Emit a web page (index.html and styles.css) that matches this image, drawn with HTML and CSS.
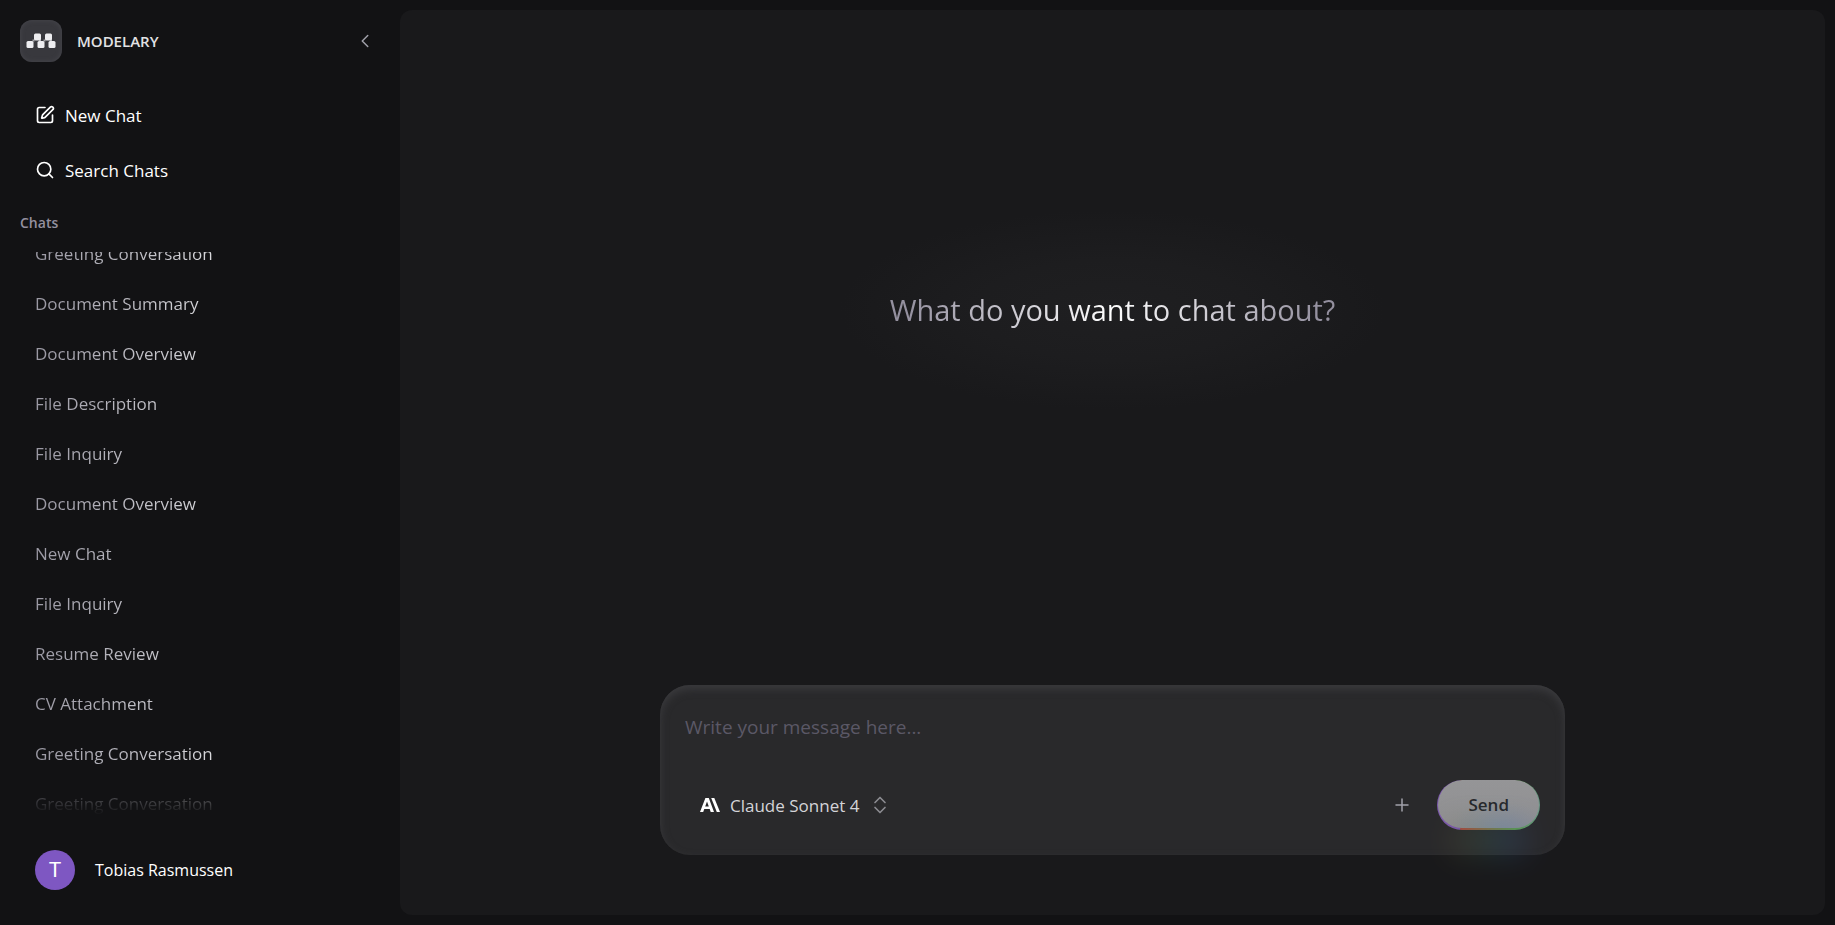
FILE: index.html
```html
<!DOCTYPE html>
<html lang="en">
<head>
<meta charset="utf-8">
<title>Modelary</title>
<link rel="stylesheet" href="styles.css">
</head>
<body class="app">
<aside class="sidebar">
  <header class="brand">
    <span class="brand-logo">
      <svg width="30" height="16" viewBox="0 0 30 16" fill="#ededf0" aria-hidden="true">
        <rect x="0.500" y="8" width="7" height="7" rx="1.500"/><rect x="8" y="0.500" width="7" height="7" rx="1.500"/><rect x="11.500" y="8" width="7" height="7" rx="1.500"/><rect x="19" y="0.500" width="7" height="7" rx="1.500"/><rect x="22.500" y="8" width="7" height="7" rx="1.500"/>
        <path d="M6.500 6.500h2v2h-2zM13 6.500h2v2h-2zM17.500 6.500h2v2h-2zM24 6.500h2v2h-2z" opacity=".6"/>
      </svg>
    </span>
    <span class="brand-name">MODELARY</span>
    <button class="collapse" type="button" aria-label="Collapse sidebar">
      <svg width="22" height="22" viewBox="0 0 24 24" fill="none" stroke="currentColor" stroke-width="1.600" stroke-linecap="round" stroke-linejoin="round"><path d="m15 18-6-6 6-6"/></svg>
    </button>
  </header>
  <nav class="actions">
    <button class="action" type="button">
      <svg width="20" height="20" viewBox="0 0 24 24" fill="none" stroke="currentColor" stroke-width="2" stroke-linecap="round" stroke-linejoin="round" aria-hidden="true"><path d="M12 3H5a2 2 0 0 0-2 2v14a2 2 0 0 0 2 2h14a2 2 0 0 0 2-2v-7"/><path d="M18.375 2.625a1 1 0 0 1 3 3l-9.013 9.014a2 2 0 0 1-.853.505l-2.873.840a.5.5 0 0 1-.620-.620l.840-2.873a2 2 0 0 1 .506-.852z"/></svg>
      New Chat
    </button>
    <button class="action" type="button">
      <svg width="20" height="20" viewBox="0 0 24 24" fill="none" stroke="currentColor" stroke-width="2" stroke-linecap="round" stroke-linejoin="round" aria-hidden="true"><circle cx="11" cy="11" r="8"/><path d="m21 21-4.300-4.300"/></svg>
      Search Chats
    </button>
  </nav>
  <h2 class="section-title">Chats</h2>
  <div class="history">
    <ul class="chat-list">
      <li><a class="chat" href="#"><span class="chat-title">Greeting Conversation</span></a></li>
      <li><a class="chat" href="#"><span class="chat-title">Document Summary</span></a></li>
      <li><a class="chat" href="#"><span class="chat-title">Document Overview</span></a></li>
      <li><a class="chat" href="#"><span class="chat-title">File Description</span></a></li>
      <li><a class="chat" href="#"><span class="chat-title">File Inquiry</span></a></li>
      <li><a class="chat" href="#"><span class="chat-title">Document Overview</span></a></li>
      <li><a class="chat" href="#"><span class="chat-title">New Chat</span></a></li>
      <li><a class="chat" href="#"><span class="chat-title">File Inquiry</span></a></li>
      <li><a class="chat" href="#"><span class="chat-title">Resume Review</span></a></li>
      <li><a class="chat" href="#"><span class="chat-title">CV Attachment</span></a></li>
      <li><a class="chat" href="#"><span class="chat-title">Greeting Conversation</span></a></li>
      <li><a class="chat" href="#"><span class="chat-title">Greeting Conversation</span></a></li>
    </ul>
  </div>
  <button class="profile" type="button"><span class="avatar">T</span>Tobias Rasmussen</button>
</aside>
<main class="panel">
  <section class="welcome"><h1 class="welcome-title">What do you want to chat about?</h1></section>
  <form class="composer">
    <textarea class="message" rows="1" aria-label="Message" placeholder="Write your message here..."></textarea>
    <div class="toolbar">
      <label class="model">
        <svg width="20" height="16" viewBox="0 0 20 16" fill="#fff" aria-hidden="true"><path fill-rule="evenodd" d="M5.400 1h3.400L14 15h-3.300l-1-2.900H4.300L3.200 15H0zM5.200 9.500h3.600L7 4.600z"/><path d="M11.200 1h3.100L20 15h-3.200z"/></svg>
        <select class="model-select" aria-label="Model"><option>Claude Sonnet 4</option></select>
        <svg class="chevrons" width="20" height="20" viewBox="0 0 24 24" fill="none" stroke="currentColor" stroke-width="2" stroke-linecap="round" stroke-linejoin="round" aria-hidden="true"><path d="m6 9 6-6 6 6M6 15l6 6 6-6"/></svg>
      </label>
      <button class="attach" type="button" aria-label="Add attachment">
        <svg width="20" height="20" viewBox="0 0 20 20" stroke="currentColor" stroke-width="1.500" stroke-linecap="round" aria-hidden="true"><path d="M10 4v12M4 10h12"/></svg>
      </button>
      <button class="send" type="submit">Send</button>
    </div>
  </form>
</main>
</body>
</html>
```
FILE: styles.css
```css
* { box-sizing: border-box; }

.app {
  margin: 0;
  height: 100vh;
  display: flex;
  overflow: hidden;
  background: #121214;
  color: #fff;
  font-family: "Open Sans", "Noto Sans", sans-serif;
  font-size: 17px;
}

button, textarea, select {
  margin: 0;
  padding: 0;
  border: 0;
  background: none;
  color: inherit;
  font: inherit;
}

svg { flex: none; }

.sidebar {
  width: 400px;
  flex: none;
  padding: 20px 20px 35px;
  display: flex;
  flex-direction: column;
}

.brand {
  display: flex;
  align-items: center;
  gap: 15px;
}

.brand-logo {
  width: 42px;
  height: 42px;
  display: grid;
  place-items: center;
  border-radius: 12px;
  background: #38383d;
  box-shadow: inset 0 0 5px #48484e;
}

.brand-name {
  flex: 1;
  color: #e2e2e4;
  font-size: 15px;
  font-weight: 600;
}

.collapse {
  width: 30px;
  height: 30px;
  display: grid;
  place-items: center;
  color: #a1a1aa;
}

.actions {
  margin-top: 28px;
  display: flex;
  flex-direction: column;
  gap: 5px;
}

.action {
  height: 50px;
  padding: 0 15px;
  display: flex;
  align-items: center;
  gap: 10px;
}

.section-title {
  margin: 17px 0 0;
  color: #94909f;
  font-size: 14px;
  font-weight: 600;
  line-height: 22px;
}

.history {
  flex: 1;
  min-height: 0;
  margin-top: 18px;
  overflow: hidden;
  mask-image: linear-gradient(to top, transparent 0, #000 50px);
}

.chat-list {
  margin: -24px 0 0;
  padding: 0;
  list-style: none;
}

.chat {
  height: 50px;
  padding: 0 15px;
  display: flex;
  align-items: center;
  text-decoration: none;
}

.chat-title {
  flex: 1;
  background: linear-gradient(90deg, #9a98a3, #d4d4d8 50%, #fff);
  background-clip: text;
  color: transparent;
}

.profile {
  margin-top: 35px;
  padding: 0 15px;
  display: flex;
  align-items: center;
  gap: 20px;
  font-size: 16px;
}

.avatar {
  width: 40px;
  height: 40px;
  display: grid;
  place-items: center;
  border-radius: 50%;
  background: #7e57c2;
  font-family: Roboto, sans-serif;
  font-size: 21px;
}

.panel {
  flex: 1;
  min-width: 0;
  margin: 10px 10px 10px 0;
  padding: 0 60px 60px;
  display: flex;
  flex-direction: column;
  align-items: center;
  border-radius: 12px;
  background: #19191b;
}

.welcome {
  flex: 1;
  display: flex;
  align-items: center;
}

.welcome-title {
  margin: 0 0 76px;
  padding: 80px 50px;
  background:
    linear-gradient(90deg, #94909f 12%, #fff 50%, #94909f 88%) text,
    radial-gradient(closest-side, #1f1f21, #1d1d1f 50%, #19191b);
  color: transparent;
  font-size: 29px;
  font-weight: 400;
  line-height: 40px;
  text-align: center;
}

.composer {
  width: 100%;
  max-width: 905px;
  padding: 25px;
  display: flex;
  flex-direction: column;
  border-radius: 30px;
  background: #29292b;
  box-shadow: inset 0 4px 8px #3b3b3e;
}

.message {
  height: 70px;
  outline: 0;
  resize: none;
  font-size: 19px;
  line-height: 34px;
}

.message::placeholder { color: #5b5866; opacity: 1; }

.toolbar {
  display: flex;
  align-items: center;
  gap: 15px;
}

.model {
  margin-right: auto;
  padding: 0 15px;
  display: flex;
  align-items: center;
  gap: 10px;
  color: #d4d4d8;
}

.model-select { appearance: none; outline: 0; }

.chevrons { color: #8b8b91; }

.attach {
  width: 40px;
  height: 40px;
  display: grid;
  place-items: center;
  color: #a1a1aa;
}

.send {
  position: relative;
  height: 50px;
  padding: 0 30px;
  border: solid transparent;
  border-width: 0 1px 2px;
  border-radius: 25px;
  background:
    radial-gradient(50px 26px at 62% 100%, #878d9a, transparent) padding-box,
    linear-gradient(#959597, #8f8f91) padding-box,
    linear-gradient(90deg, #7c58ae 22%, #a84a40 23%, #5c9a4c 77%, #6a9a88) border-box;
  color: #27282b;
  font-weight: 600;
}

.send::after {
  content: "";
  position: absolute;
  left: 10%;
  bottom: -30px;
  width: 80%;
  height: 36px;
  background: linear-gradient(90deg, #6a5030, #3f7a5c 45%, #3070a8 70%, #404070);
  filter: blur(14px);
  opacity: .22;
  pointer-events: none;
}
```
